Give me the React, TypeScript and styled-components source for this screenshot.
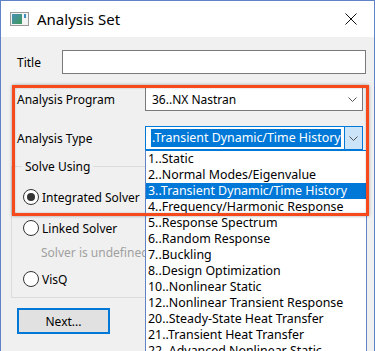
import styled, { createGlobalStyle } from 'styled-components';

const GlobalStyle = createGlobalStyle`
  html, body {
    margin: 0;
    padding: 0;
    background: #ffffff;
  }
  * {
    box-sizing: border-box;
  }
`;

const analysisTypes = [
  '1..Static',
  '2..Normal Modes/Eigenvalue',
  '3..Transient Dynamic/Time History',
  '4..Frequency/Harmonic Response',
  '5..Response Spectrum',
  '6..Random Response',
  '7..Buckling',
  '8..Design Optimization',
  '10..Nonlinear Static',
  '12..Nonlinear Transient Response',
  '20..Steady-State Heat Transfer',
  '21..Transient Heat Transfer',
  '22..Advanced Nonlinear Static',
];

const Window = styled.div`
  position: relative;
  width: 375px;
  height: 351px;
  border: 1px solid #5f83c6;
  border-bottom: none;
  overflow: hidden;
  font-family: 'Noto Sans', 'Open Sans', sans-serif;
  font-size: 12px;
  color: #000;
  display: flex;
  flex-direction: column;
`;

const TitleBar = styled.div`
  height: 36px;
  flex: none;
  background: #ffffff;
  display: flex;
  align-items: center;
  padding: 0 17px 0 9px;
  gap: 8px;
`;

const Caption = styled.span`
  font-size: 15px;
  flex: 1;
  padding-bottom: 1px;
`;

const Body = styled.div`
  flex: 1;
  background: #f0f0f0;
  display: flex;
  flex-direction: column;
  padding: 13px 8px 0 16px;
`;

const Row = styled.div<{ $gap: number }>`
  display: flex;
  align-items: center;
  height: 24px;
  margin-bottom: ${({ $gap }) => $gap}px;
`;

const Label = styled.span<{ $width: number }>`
  width: ${({ $width }) => $width}px;
  flex: none;
`;

const TextInput = styled.div`
  flex: 1;
  height: 24px;
  background: #fff;
  border: 1px solid #7a7a7a;
`;

const Combo = styled.div<{ $focused?: boolean }>`
  position: relative;
  flex: 1;
  margin-right: 3px;
  height: 24px;
  background: #fff;
  border: 1px solid ${({ $focused }) => ($focused ? '#0078d7' : '#7a7a7a')};
  display: flex;
  align-items: center;
  padding-left: ${({ $focused }) => ($focused ? 5 : 6)}px;
`;

const ComboValue = styled.span<{ $selected?: boolean }>`
  flex: 1;
  white-space: nowrap;
  overflow: hidden;
  ${({ $selected }) =>
    $selected
      ? `
    flex: none;
    background: #0078d7;
    color: #fff;
    height: 18px;
    line-height: 18px;
    padding: 0 1px;
    width: 190px;
    font-size: 12.4px;
  `
      : ''}
`;

const ComboButton = styled.div<{ $active?: boolean }>`
  margin-left: auto;
  width: ${({ $active }) => ($active ? 18 : 20)}px;
  height: 100%;
  display: flex;
  align-items: center;
  justify-content: center;
  background: ${({ $active }) => ($active ? '#cce4f7' : 'transparent')};
  border-left: ${({ $active }) => ($active ? '1px solid #0078d7' : 'none')};
`;

const DropList = styled.div`
  position: absolute;
  top: 23px;
  left: -1px;
  width: 222px;
  height: 220px;
  background: #fff;
  border: 1px solid #5f83c6;
  border-top-color: #0078d7;
  z-index: 2;
`;

const DropItem = styled.div<{ $active?: boolean }>`
  height: 16px;
  line-height: 16px;
  padding-left: 2px;
  font-size: 12.4px;
  white-space: nowrap;
  background: ${({ $active }) => ($active ? '#0078d7' : 'transparent')};
  color: ${({ $active }) => ($active ? '#fff' : '#000')};
`;

const Group = styled.fieldset`
  margin: 8px 64px 0 -6px;
  padding: 4px 0 8px 11px;
  border: 1px solid #dcdcdc;
  height: 140px;
  display: flex;
  flex-direction: column;
`;

const Legend = styled.legend`
  padding: 0 3px;
  margin-left: -1px;
`;

const RadioRow = styled.div<{ $gap: number }>`
  display: flex;
  align-items: center;
  gap: 3px;
  height: 18px;
  margin-top: ${({ $gap }) => $gap}px;
`;

const RadioCircle = styled.span<{ $checked?: boolean }>`
  width: 16px;
  height: 16px;
  border-radius: 50%;
  border: 1px solid #333;
  background: #fff;
  display: flex;
  align-items: center;
  justify-content: center;
  &::after {
    content: '';
    width: 8px;
    height: 8px;
    border-radius: 50%;
    background: ${({ $checked }) => ($checked ? '#333' : 'transparent')};
  }
`;

const Hint = styled.span`
  color: #a0a0a0;
  margin: 7px 0 0 18px;
  white-space: nowrap;
`;

const NextButton = styled.button`
  margin-top: 10px;
  width: 93px;
  height: 26px;
  background: #e1e1e1;
  border: 2px solid #0078d7;
  font-family: inherit;
  font-size: 12px;
  color: #000;
  padding: 0;
`;

const Annotation = styled.div`
  position: absolute;
  left: 11px;
  top: 84px;
  width: 357px;
  height: 131px;
  border: 3px solid #f74a1c;
  box-shadow: 0 0 3px rgba(0, 0, 0, 0.35), inset 0 0 2px rgba(0, 0, 0, 0.25);
  z-index: 3;
  pointer-events: none;
`;

const AppIcon = () => (
  <svg width="19" height="14" viewBox="0 0 19 14">
    <rect x="0.5" y="0.5" width="18" height="13" fill="#f4f4f4" stroke="#9a9a9a" />
    <defs>
      <linearGradient id="ic" x1="0" y1="0" x2="1" y2="1">
        <stop offset="0" stopColor="#4a8fb8" />
        <stop offset="1" stopColor="#3c9a5a" />
      </linearGradient>
    </defs>
    <rect x="2" y="2" width="10" height="10" fill="url(#ic)" />
    <rect x="14" y="2" width="2" height="4" fill="#3c8fc0" />
  </svg>
);

const CloseIcon = () => (
  <svg width="12" height="12" viewBox="0 0 12 12">
    <path d="M0.5 0.5 L11.5 11.5 M11.5 0.5 L0.5 11.5" stroke="#111" strokeWidth="1" />
  </svg>
);

const Chevron = () => (
  <svg width="9" height="5" viewBox="0 0 9 5">
    <path d="M0.5 0.5 L4.5 4.5 L8.5 0.5" fill="none" stroke="#555" strokeWidth="1" />
  </svg>
);

export default function App() {
  return (
    <>
      <GlobalStyle />
      <Window>
        <TitleBar>
          <AppIcon />
          <Caption>Analysis Set</Caption>
          <CloseIcon />
        </TitleBar>
        <Body>
          <Row $gap={13}>
            <Label $width={45}>Title</Label>
            <TextInput />
          </Row>
          <Row $gap={15}>
            <Label $width={128}>Analysis Program</Label>
            <Combo>
              <ComboValue>36..NX Nastran</ComboValue>
              <ComboButton>
                <Chevron />
              </ComboButton>
            </Combo>
          </Row>
          <Row $gap={0}>
            <Label $width={128}>Analysis Type</Label>
            <Combo $focused>
              <ComboValue $selected>.Transient Dynamic/Time History</ComboValue>
              <ComboButton $active>
                <Chevron />
              </ComboButton>
              <DropList>
                {analysisTypes.map((t) => (
                  <DropItem key={t} $active={t.startsWith('3..')}>
                    {t}
                  </DropItem>
                ))}
              </DropList>
            </Combo>
          </Row>
          <Group>
            <Legend>Solve Using</Legend>
            <RadioRow $gap={9}>
              <RadioCircle $checked />
              <span>Integrated Solver</span>
            </RadioRow>
            <RadioRow $gap={13}>
              <RadioCircle />
              <span>Linked Solver</span>
            </RadioRow>
            <Hint>Solver is undefined</Hint>
            <RadioRow $gap={9}>
              <RadioCircle />
              <span>VisQ</span>
            </RadioRow>
          </Group>
          <NextButton>Next...</NextButton>
        </Body>
        <Annotation />
      </Window>
    </>
  );
}
